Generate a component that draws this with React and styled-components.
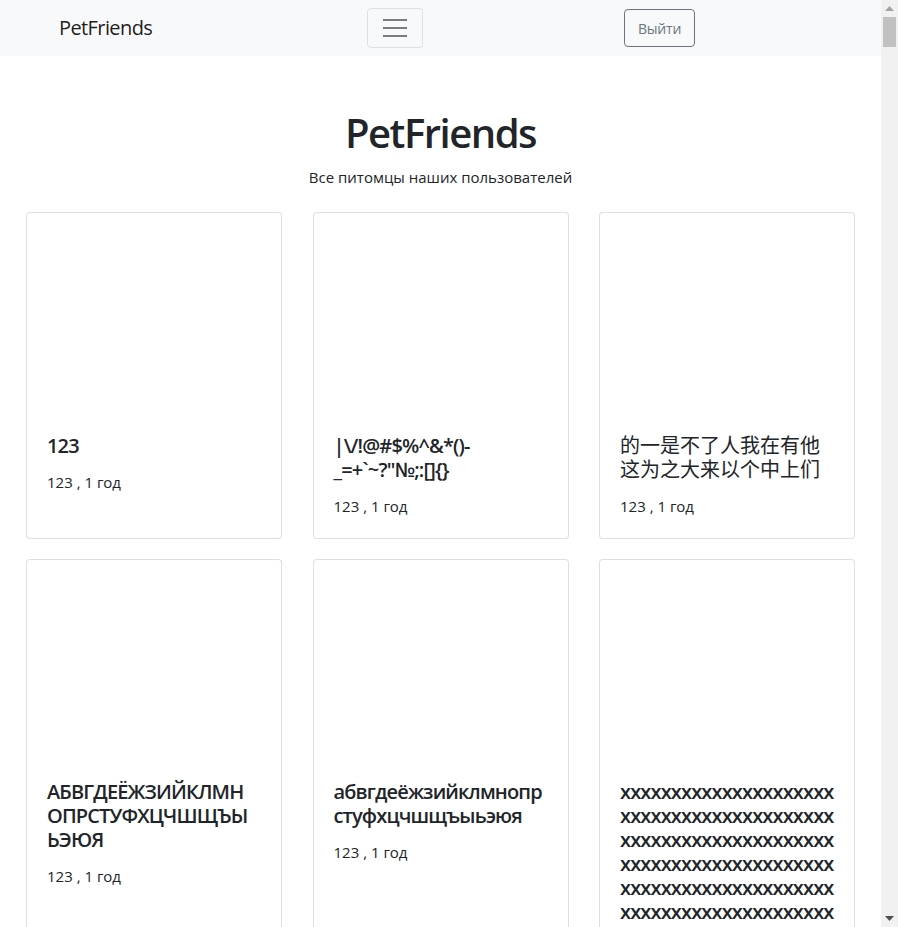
import React from "react";
import styled, { createGlobalStyle } from "styled-components";

const GlobalStyle = createGlobalStyle`
  html, body { margin: 0; padding: 0; height: 100%; overflow: hidden; }
  body {
    font-family: "Open Sans", "Noto Sans CJK SC", sans-serif;
    color: #212529;
    background: #fff;
    font-size: 16px;
    line-height: 1.5;
  }
  #root { height: 100%; }
  * { box-sizing: border-box; }
`;

const Viewport = styled.div`
  display: flex;
  height: 100%;
`;

const Page = styled.div`
  flex: 1;
  min-width: 0;
  overflow: hidden;
`;

const ScrollTrack = styled.div`
  width: 17px;
  flex: none;
  background: #f1f1f1;
  display: flex;
  flex-direction: column;
  align-items: center;
`;

const ScrollArrow = styled.div`
  height: 17px;
  width: 17px;
  display: flex;
  align-items: center;
  justify-content: center;
`;

const ScrollThumb = styled.div`
  width: 13px;
  height: 30px;
  background: #c1c1c1;
`;

const ScrollSpacer = styled.div`
  flex: 1;
`;

const Navbar = styled.nav`
  height: 56px;
  background: #f8f9fa;
  display: grid;
  grid-template-columns: 308px 56px 201px auto;
  align-items: center;
  padding-left: 59px;
`;

const Brand = styled.a`
  font-size: 20px;
  line-height: 30px;
  letter-spacing: -0.6px;
  color: rgba(0, 0, 0, 0.9);
  text-decoration: none;
`;

const Toggler = styled.button`
  width: 56px;
  height: 40px;
  margin-top: -1px;
  background: transparent;
  border: 1px solid rgba(0, 0, 0, 0.1);
  border-radius: 4px;
  padding: 0;
  display: flex;
  align-items: center;
  justify-content: center;
`;

const LogoutButton = styled.button`
  justify-self: start;
  width: 71px;
  height: 38px;
  background: transparent;
  border: 1px solid #6c757d;
  border-radius: 4px;
  color: #6c757d;
  font-family: inherit;
  font-size: 14px;
  letter-spacing: -0.2px;
  padding: 0;
`;

const Header = styled.header`
  text-align: center;
  padding-top: 53px;
`;

const Title = styled.h1`
  margin: 0;
  font-size: 40px;
  font-weight: 600;
  letter-spacing: -1.5px;
  line-height: 48px;
  color: #212529;
`;

const Subtitle = styled.p`
  margin: 8px 0 0;
  font-size: 15px;
  line-height: 24px;
`;

const Grid = styled.main`
  display: grid;
  grid-template-columns: repeat(3, 256px);
  column-gap: 30.5px;
  row-gap: 20px;
  justify-content: center;
  margin-top: 23px;
  padding-bottom: 40px;
`;

const Card = styled.div`
  border: 1px solid rgba(0, 0, 0, 0.125);
  border-radius: 4px;
  background: #fff;
  display: flex;
  flex-direction: column;
  overflow-wrap: break-word;
  min-width: 0;
`;

const CardImage = styled.div`
  height: 200.5px;
`;

const CardBody = styled.div`
  padding: 20px;
`;

const CardTitle = styled.h5`
  margin: 0 0 12px;
  font-size: 20px;
  font-weight: ${(p) => (p.$cjk ? 400 : 600)};
  letter-spacing: ${(p) => (p.$cjk ? "0" : "-0.85px")};
  line-height: 24px;
  color: #212529;
  word-break: break-word;
`;

const CardText = styled.p`
  margin: 0;
  font-size: 15px;
  line-height: 24px;
  color: #212529;
`;

const HamburgerIcon = () => (
  <svg width="30" height="30" viewBox="0 0 30 30">
    <path
      d="M3 7h24M3 15h24M3 23h24"
      stroke="rgba(0,0,0,0.5)"
      strokeWidth="2"
    />
  </svg>
);

const pets = [
  { name: ["123"] },
  { name: ["|\\/!@#$%^&*()-_=+`~?\"№;:[]{}"] },
  { name: ["的一是不了人我在有他这为之大来以个中上们"], cjk: true },
  { name: ["АБВГДЕЁЖЗИЙКЛМН", "ОПРСТУФХЦЧШЩЪЫ", "ЬЭЮЯ"] },
  { name: ["абвгдеёжзийклмнопрстуфхцчшщъыьэюя"] },
  { name: ["x".repeat(21 * 8)] },
];

export default function App() {
  return (
    <Viewport>
      <GlobalStyle />
      <Page>
        <Navbar>
          <Brand href="#">PetFriends</Brand>
          <Toggler aria-label="menu">
            <HamburgerIcon />
          </Toggler>
          <span />
          <LogoutButton>Выйти</LogoutButton>
        </Navbar>
        <Header>
          <Title>PetFriends</Title>
          <Subtitle>Все питомцы наших пользователей</Subtitle>
        </Header>
        <Grid>
          {pets.map((p, i) => (
            <Card key={i}>
              <CardImage />
              <CardBody>
                <CardTitle $cjk={p.cjk}>
                  {p.name.map((line, j) => (
                    <React.Fragment key={j}>
                      {j > 0 && <br />}
                      {line}
                    </React.Fragment>
                  ))}
                </CardTitle>
                <CardText>123 , 1 год</CardText>
              </CardBody>
            </Card>
          ))}
        </Grid>
      </Page>
      <ScrollTrack>
        <ScrollArrow>
          <svg width="9" height="5" viewBox="0 0 9 5">
            <path d="M0 5L4.5 0L9 5Z" fill="#a3a3a3" />
          </svg>
        </ScrollArrow>
        <ScrollThumb />
        <ScrollSpacer />
        <ScrollArrow>
          <svg width="9" height="5" viewBox="0 0 9 5">
            <path d="M0 0L4.5 5L9 0Z" fill="#505050" />
          </svg>
        </ScrollArrow>
      </ScrollTrack>
    </Viewport>
  );
}
